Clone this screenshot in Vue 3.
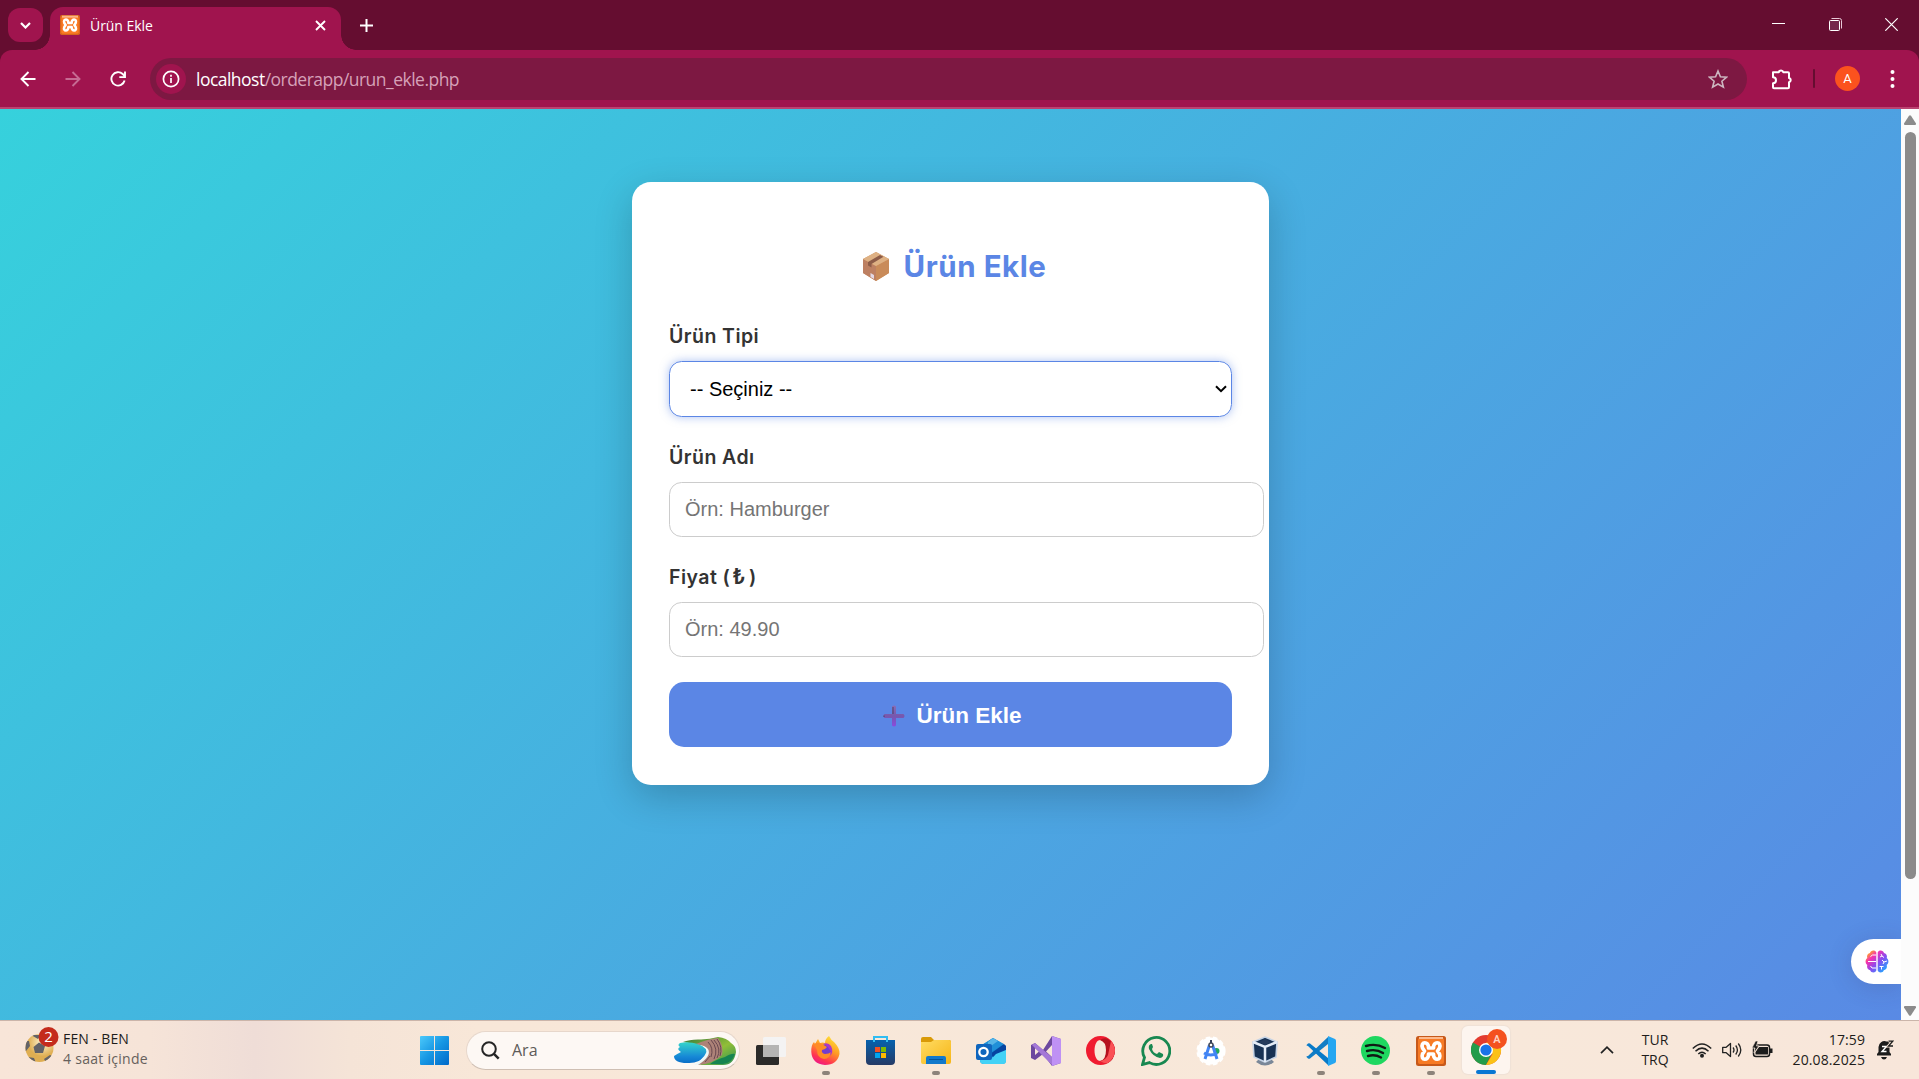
<script setup>
import { ref } from 'vue'

const productType = ref('')
const name = ref('')
const price = ref('')
</script>

<template>
  <div class="screen">
    <header class="tabstrip">
      <button class="tab-search">
        <svg width="11" height="7" viewBox="0 0 11 7"><path d="M1 1l4.500 4.500L10 1" fill="none" stroke="#fff" stroke-width="2.200" /></svg>
      </button>
      <div class="tab">
        <svg class="favicon" width="20" height="20" viewBox="0 0 30 30">
          <rect width="30" height="30" rx="2.500" fill="#d7651b" /><rect x="2" y="2" width="26" height="26" rx="2" fill="#fb7a24" />
          <rect x="3" y="1" width="24" height="3" fill="#fbb486" />
          <path d="M12.500 12C13 5 4 5 6.500 12L8.500 15L6.500 18C4 25 13 25 12.500 18H17.500C17 25 26 25 23.500 18L21.500 15L23.500 12C26 5 17 5 17.500 12Z" fill="none" stroke="#fff" stroke-width="3.800" stroke-linejoin="round" />
        </svg>
        <span class="tab-title">Ürün Ekle</span>
        <svg class="tab-close" width="11" height="11" viewBox="0 0 11 11"><path d="M1 1l9 9M10 1l-9 9" stroke="#fff" stroke-width="1.900" /></svg>
      </div>
      <svg class="new-tab" width="13" height="13" viewBox="0 0 13 13"><path d="M6.500 0v13M0 6.500h13" stroke="#fff" stroke-width="2" /></svg>
      <div class="window-controls">
        <svg width="13" height="13" viewBox="0 0 13 13"><path d="M0 5.500h13" stroke="#fff" /></svg>
        <svg width="13" height="13" viewBox="0 0 13 13"><path d="M2.500 .5h8q2 0 2 2v8" fill="none" stroke="#e8c9d7" /><rect x=".5" y="2.500" width="10" height="10" rx="1" fill="#74264a" stroke="#fff" /></svg>
        <svg width="13" height="13" viewBox="0 0 13 13"><path d="M.3 .3l12.400 12.400M12.700 .3L.3 12.700" stroke="#fff" stroke-width="1.200" /></svg>
      </div>
    </header>

    <nav class="toolbar">
      <div class="nav-icons">
        <svg width="16" height="16" viewBox="0 0 16 16"><path d="M15.500 8H1.800M8.500 1L1.500 8l7 7" fill="none" stroke="#fff" stroke-width="1.900" /></svg>
        <svg width="16" height="16" viewBox="0 0 16 16"><path d="M.5 8h13.700M7.500 1l7 7l-7 7" fill="none" stroke="#c66b93" stroke-width="1.900" /></svg>
        <svg width="16" height="16" viewBox="0 0 16 16"><path d="M14.600 9.500A6.700 6.700 0 1 1 12.700 3L15 5.400M15 .5v5.600H9.300" fill="none" stroke="#fff" stroke-width="1.900" /></svg>
      </div>
      <div class="omnibox">
        <span class="site-info">
          <svg width="18" height="18" viewBox="0 0 18 18"><circle cx="9" cy="9" r="7.600" fill="none" stroke="#fff" stroke-width="1.700" /><path d="M9 8v5M9 4.800v2" stroke="#fff" stroke-width="1.700" /></svg>
        </span>
        <span class="url"><b>localhost</b>/orderapp/urun_ekle.php</span>
        <svg class="star" width="20" height="20" viewBox="0 0 20 20"><path d="M10 2l2.400 5.700l6.200.5l-4.700 4l1.500 6L10 15l-5.400 3.200l1.500-6l-4.700-4l6.200-.5z" fill="none" stroke="#ccb7c0" stroke-width="1.600" /></svg>
      </div>
      <svg class="puzzle" width="22" height="22" viewBox="0 0 22 22"><path d="M2 4.200h5.800a2.300 2.300 0 0 1 4.500 0H17a1 1 0 0 1 1 1v4.700a2.200 2.200 0 0 1 0 4.300v5a1 1 0 0 1-1 1H3a1 1 0 0 1-1-1v-4a3 3 0 0 0 0-6z" fill="none" stroke="#fff" stroke-width="2" stroke-linejoin="round" /></svg>
      <span class="divider"></span>
      <span class="avatar">A</span>
      <svg class="dots" width="5" height="20" viewBox="0 0 5 20"><circle cx="2.500" cy="3" r="2" fill="#fff" /><circle cx="2.500" cy="10" r="2" fill="#fff" /><circle cx="2.500" cy="17" r="2" fill="#fff" /></svg>
    </nav>

    <div class="viewport">
      <main class="page">
        <form class="card" @submit.prevent>
          <h2>
            <svg width="28" height="31" viewBox="0 0 28 31">
              <path d="M1 8L14 1l13 7v14L14 30L1 22z" fill="#cf9566" />
              <path d="M1 8l13 7v15L1 22z" fill="#bd8062" /><path d="M14 15l13-7v14l-13 8z" fill="#c98b59" />
              <path d="M1 8L14 1l13 7l-13 7z" fill="#deb184" /><path d="M6 11L18 4l3.500 1.800L9.500 13v3.500L6 14.500z" fill="#8d5c48" /><path d="M8.500 22l3.500 2v4l-3.500-2z" fill="#e3d9e5" />
            </svg>
            <span>Ürün Ekle</span>
          </h2>
          <label>Ürün Tipi</label>
          <div class="select" tabindex="0">
            <span>{{ productType || '-- Seçiniz --' }}</span>
            <svg width="12" height="8" viewBox="0 0 12 8"><path d="M1 1.200l5 5l5-5" fill="none" stroke="#000" stroke-width="2" /></svg>
          </div>
          <label>Ürün Adı</label>
          <input v-model="name" type="text" placeholder="Örn: Hamburger">
          <label>Fiyat (<span class="lira">₺</span>)</label>
          <input v-model="price" type="text" placeholder="Örn: 49.90">
          <button class="submit">
            <svg width="22" height="22" viewBox="0 0 22 22">
              <defs><linearGradient id="plus" x2="0" y2="1"><stop stop-color="#8a6cb6" /><stop offset=".5" stop-color="#7658ad" /><stop offset="1" stop-color="#8a4bdf" /></linearGradient></defs>
              <path d="M9 1.500q2-2 4 0V9h7.500q2 2 0 4H13v7.500q-2 2-4 0V13H1.500q-2-2 0-4H9z" fill="url(#plus)" /><path d="M1 10.500v1.500M10 2v7" stroke="#4c4269" />
            </svg>
            <span>Ürün Ekle</span>
          </button>
        </form>
        <div class="assistant">
          <svg width="24" height="23" viewBox="0 0 24 23">
            <defs><linearGradient id="brain" x2="1" y2="1"><stop offset=".1" stop-color="#ffab20" /><stop offset=".3" stop-color="#f52fb0" /><stop offset=".55" stop-color="#8a4bf0" /><stop offset=".9" stop-color="#1fa8ff" /></linearGradient></defs>
            <path d="M11.300 2.500C10-.5 5.500.3 5 3C2.500 3.500 1.500 6 2.300 8C0 9.500 0 13.500 2.300 15C1.500 18 3 20 5.200 20.200C6 23 10.300 23.300 11.300 20.500zM12.700 2.500C14-.5 18.500.3 19 3C21.500 3.500 22.500 6 21.700 8C24 9.500 24 13.500 21.700 15C22.500 18 21 20 18.800 20.200C18 23 13.700 23.300 12.700 20.500z" fill="url(#brain)" />
            <path d="M11 5H7.500L5.500 6.500M11 11.500H3M11 18H7l-1.500-2M15 7l2-1l2 1.500M17 6l-1-2M17 10l2 2l3-1M19 12l-1 2M14.500 16.500h4M16.500 16.500v3" fill="none" stroke="#fff" stroke-width="1" />
          </svg>
        </div>
      </main>
      <aside class="scrollbar">
        <svg width="12" height="10" viewBox="0 0 12 10"><path d="M5 .8q1-1.200 2 0l5 7.700q.2 1.500-1 1.500H1q-1.200 0-1-1.500z" fill="#8b8b8b" /></svg>
        <span class="thumb"></span>
        <svg class="down" width="12" height="10" viewBox="0 0 12 10"><path d="M5 9.200q1 1.200 2 0l5-7.700Q12.200 0 11 0H1Q-.2 0 0 1.500z" fill="#8b8b8b" /></svg>
      </aside>
    </div>

    <footer class="taskbar">
      <div class="widget">
        <svg width="34" height="36" viewBox="0 0 34 36">
          <defs><radialGradient id="ball" cx=".6" cy=".3"><stop stop-color="#fff7d6" /><stop offset="1" stop-color="#dfae52" /></radialGradient><clipPath id="ballclip"><circle cx="14.500" cy="21" r="14" /></clipPath></defs>
          <circle cx="14.500" cy="21" r="14" fill="url(#ball)" />
          <path clip-path="url(#ballclip)" d="M8.500 20l5.500-4.500l6 3.500l-2 7h-8zM0 14l4 0l1 5l-4 5H0zM3 30l6 1l2 5H3zM19 32l6-4l4 2l-7 7zM6 8h10l-3 4z" fill="#626267" />
          <circle cx="23.500" cy="10" r="10" fill="#c42b1c" /><text x="23.500" y="15.300" text-anchor="middle" fill="#fff" font-family="Open Sans, sans-serif" font-size="15">2</text>
        </svg>
        <div class="widget-text"><span>FEN - BEN</span><small>4 saat içinde</small></div>
      </div>

      <div class="apps">
        <div class="app">
          <svg width="29" height="29" viewBox="0 0 29 29"><defs><linearGradient id="win" x2="1" y2="1"><stop stop-color="#4cc9fb" /><stop offset=".5" stop-color="#1696e3" /><stop offset="1" stop-color="#0069c9" /></linearGradient></defs><path d="M1 0h13v14H0V1q0-1 1-1M15 0h13q1 0 1 1v13H15zM0 15h14v14H1q-1 0-1-1zM15 15h14v13q0 1-1 1H15z" fill="url(#win)" /></svg>
        </div>
        <div class="search">
          <svg width="19" height="19" viewBox="0 0 19 19"><circle cx="8" cy="8" r="6.800" fill="none" stroke="#252525" stroke-width="2" /><path d="M12.700 12.700l5 5" stroke="#252525" stroke-width="2.500" /></svg>
          <span>Ara</span>
          <svg class="cove" width="62" height="29" viewBox="0 0 62 29">
            <defs><linearGradient id="sea" x2="0" y2="1"><stop stop-color="#35d5cb" /><stop offset=".7" stop-color="#1687d6" /><stop offset="1" stop-color="#0a6fc7" /></linearGradient><linearGradient id="land" x2="1" y2="1"><stop stop-color="#36793b" /><stop offset=".55" stop-color="#91be38" /><stop offset="1" stop-color="#2b9155" /></linearGradient></defs>
            <path d="M9 5Q16 2 27 2.500Q36 2 44 0Q53 1 57 6Q62 9 62 15Q60 28 49 28H23Q42 20 33 9z" fill="url(#land)" />
            <path d="M6 6Q14 4 24 7Q35 11 32 18Q25 27 13 26Q0 26 0 19Q3 17 7 15Q2 12 6 10Q3 8 6 6" fill="url(#sea)" /><path d="M33 10q1 9-13 18h6q12-7 12-14z" fill="#edf7f8" />
            <path d="M22 7Q34 2 44 1Q50 9 48 18Q39 27 24 28Q38 19 34 12Q31 8 22 7" fill="#ad8278" /><path d="M34 5q6 6 3 15M37 3q8 9 3 19M40 3q8 9 3 18M43 2q6 8 3 17M31 25l5-6" fill="none" stroke="#68484f" /><path d="M51 20q7-4 10-3q-3 9-12 10l-13 0q5-4 15-7" fill="#168451" />
          </svg>
        </div>
        <div class="app">
          <svg width="30" height="28" viewBox="0 0 30 28"><rect y="8" width="23" height="20" rx="1.500" fill="#2b2a29" /><rect x="7" width="23" height="20" rx="1.500" fill="#f4f3f3" /><path d="M7 8h16v12H7z" fill="#b5b4b3" /></svg>
        </div>
        <div class="app running">
          <svg width="29" height="29" viewBox="0 0 29 29"><defs><linearGradient id="fox" x1=".8" x2=".3" y2="1"><stop stop-color="#ffe83a" /><stop offset=".45" stop-color="#ff9a24" /><stop offset=".8" stop-color="#ff3551" /><stop offset="1" stop-color="#ed168b" /></linearGradient></defs><path d="M18 0q2 4 5 6q6 6 5.500 12Q26 29 14 29Q1 28 .3 16Q0 9 3 6l1 2l3-5l2 4q3-1 5 0q0-4 4-7" fill="url(#fox)" /><circle cx="14" cy="15" r="6.500" fill="#743ccd" /><path d="M3 8q5-2 8 0l5 3q-2 3-5 3q-1 3 3 4q4 0 6-2q-1 7-7 7Q6 22 6 14z" fill="#ff8b26" /><path d="M12 8q5-2 8 2q3 6-1 10q2-5-1-7q-1-3-6-5" fill="#ac37c8" /></svg>
        </div>
        <div class="app">
          <svg width="29" height="29" viewBox="0 0 29 29"><defs><linearGradient id="store" x2="0" y2="1"><stop stop-color="#0661ad" /><stop offset="1" stop-color="#263b66" /></linearGradient></defs><path d="M0 4h29v21q0 4-4 4H4q-4 0-4-4z" fill="url(#store)" /><path d="M8 6V1h13v5" fill="none" stroke="#31bdf2" stroke-width="2" /><path d="M9 11h5v5H9z" fill="#f25022" /><path d="M15 11h5v5h-5z" fill="#7fba00" /><path d="M9 17h5v5H9z" fill="#00a4ef" /><path d="M15 17h5v5h-5z" fill="#ffb900" /></svg>
        </div>
        <div class="app running">
          <svg width="30" height="27" viewBox="0 0 30 27"><defs><linearGradient id="folder" x2="1" y2="1"><stop stop-color="#ffdc63" /><stop offset="1" stop-color="#f6b516" /></linearGradient></defs><path d="M0 2q0-2 2-2h8l3 3h15q2 0 2 2v8H0z" fill="#d99a08" /><path d="M0 5h10l3-2h15q2 0 2 2v20q0 2-2 2H2q-2 0-2-2z" fill="url(#folder)" /><path d="M5 27v-6q0-2 2-2h16q2 0 2 2v6z" fill="#1279cb" /><path d="M8 22.500h14" stroke="#06559a" /></svg>
        </div>
        <div class="app">
          <svg width="30" height="26" viewBox="0 0 30 26"><path d="M4 8L17 0l13 8v14q0 4-4 4H8q-4 0-4-4z" fill="#178bd1" /><path d="M5 8L17 0l11 6l-14 9z" fill="#1f8fd8" /><path d="M12 4l5-4l5 3l-10 7z" fill="#55b4e7" /><path d="M14 16L28 6l2 2v4l-12 8z" fill="#0645a1" /><path d="M4 22q12 0 16-6l10-4v11q0 3-3 3H8q-4 0-4-4" fill="#43d2f6" /><rect y="6" width="16" height="16" rx="2" fill="#0f65bd" /><circle cx="7.500" cy="14" r="4.200" fill="none" stroke="#fff" stroke-width="2.300" /></svg>
        </div>
        <div class="app">
          <svg width="30" height="30" viewBox="0 0 30 30"><path d="M0 9l4-2l8 7l9-14l9 3v24l-9 3L12 18l-8 6l-4-2zM4 12v7l4-3.500zM21 9l-6 6.500l6 5.500z" fill="#6d489f" fill-rule="evenodd" /><path d="M4 7l18 15v8L1 9z" fill="#a478d7" /><path d="M21 0l9 3v24l-9 3z" fill="#bf91f4" /></svg>
        </div>
        <div class="app">
          <svg width="29" height="29" viewBox="0 0 29 29"><path d="M14.500 0a14.500 14.500 0 1 0 0 29a14.500 14.500 0 1 0 0-29M14.500 4c4 0 6 5 6 10.500s-2 10.500-6 10.500s-6-5-6-10.500s2-10.500 6-10.500" fill="#f01b30" fill-rule="evenodd" /><path d="M14 4Q18 1 22 3Q29 8 29 15Q28 24 22 27Q18 28 14 25q6-1 6-11q0-8-6-10" fill="#b5121f" /><path d="M25 5q4 5 4 10q-1 8-7 12q-4 1-8-2q6-1 8-6z" fill="#fa5055" /></svg>
        </div>
        <div class="app">
          <svg width="30" height="30" viewBox="0 0 30 30"><path d="M1.500 28.500l2-7A13.500 13.500 0 1 1 8.500 26.600z" fill="none" stroke="#188851" stroke-width="2.800" /><path d="M10 8q-3 1-2 5q4 8 11 9q4-1 3-4l-4-2l-2 2q-4-1-5-5l1-2l-1-3z" fill="#188851" /></svg>
        </div>
        <div class="app">
          <svg width="30" height="30" viewBox="0 0 30 30"><circle cx="15" cy="15" r="13.600" fill="#fff" /><circle cx="15" cy="15" r="13.600" fill="none" stroke="#fff" stroke-width="2" stroke-dasharray="4.500 2.800" /><circle cx="20.500" cy="15" r="3" fill="#24a85d" /><path d="M13.500 9L9 23M16.500 9L21 23M8 17q7 4 13 0" fill="none" stroke="#4285f4" stroke-width="3" /><circle cx="15" cy="9" r="2" fill="#fff" stroke="#454c5b" stroke-width="1.500" /><path d="M15 4v3" stroke="#37415b" stroke-width="2" /></svg>
        </div>
        <div class="app virtual">
          <svg width="26" height="30" viewBox="0 0 26 30"><path d="M6 24h14l2 2q-9 7-18 0z" fill="#7a8798" /><path d="M1 6L13 1l12 5l-1 15l-11 5l-11-5z" fill="#183254" stroke="#c5d3e5" stroke-width="1.600" /><path d="M1 6l12 5l12-5M13 11v15" fill="none" stroke="#e3ebf6" stroke-width="2.500" /><path d="M7 6l6-3l6 3l-6 3z" fill="#253a5b" /></svg>
        </div>
        <div class="app running">
          <svg width="30" height="30" viewBox="0 0 30 30"><path d="M2 20L22 1v7L4 22.500q-1 .5-2 0L.5 21q-.5-1 1.500-1" fill="#127dc5" /><path d="M2 10l20 19v-7L4 7.500q-1-.5-2 0L.5 9q-.5.500 1.500 1" fill="#087ac8" /><path d="M22 0l7 3q1 .5 1 2v20q0 1.500-1 2l-7 3z" fill="#25a6f1" /></svg>
        </div>
        <div class="app running">
          <svg width="29" height="29" viewBox="0 0 29 29"><circle cx="14.500" cy="14.500" r="14.500" fill="#1fd760" /><path d="M5 10q10-3 19 2M6 15q9-2.500 16 2M7 20q7-2 13 1.500" fill="none" stroke="#101a14" stroke-width="2.400" stroke-linecap="round" /></svg>
        </div>
        <div class="app running">
          <svg width="30" height="30" viewBox="0 0 30 30"><rect width="30" height="30" rx="2.500" fill="#c7591a" /><rect x="2" y="2" width="26" height="26" rx="2" fill="#f77b25" /><path d="M3 2h24" stroke="#fcb98d" stroke-width="2" /><path d="M12.500 12C13 5 4 5 6.500 12L8.500 15L6.500 18C4 25 13 25 12.500 18H17.500C17 25 26 25 23.500 18L21.500 15L23.500 12C26 5 17 5 17.500 12Z" fill="none" stroke="#fff" stroke-width="3.700" stroke-linejoin="round" /></svg>
        </div>
        <div class="app active">
          <svg width="36" height="36" viewBox="0 0 36 36"><g transform="translate(0 6)"><circle cx="15" cy="15" r="15" fill="#e33b2f" /><path d="M15 15L2 7.500A15 15 0 0 0 15 30l6-12z" fill="#239c4b" /><path d="M15 30A15 15 0 0 0 28 7.500H15L21.500 19z" fill="#fbc116" /><circle cx="15" cy="15" r="7" fill="#fff" /><circle cx="15" cy="15" r="5.600" fill="#1a73e8" /></g><circle cx="26" cy="10" r="10" fill="#f4511e" /><text x="26" y="14" text-anchor="middle" fill="#ffd3c3" font-size="11" font-weight="600" font-family="Roboto, sans-serif">A</text></svg>
        </div>
      </div>

      <div class="tray">
        <svg class="chevron" width="14" height="8" viewBox="0 0 14 8"><path d="M1 7.200l6-6l6 6" fill="none" stroke="#222" stroke-width="1.700" /></svg>
        <div class="lang"><span>TUR</span><span>TRQ</span></div>
        <svg class="wifi" width="20" height="15" viewBox="0 0 20 15"><path d="M.8 5.500Q10-3.500 19.200 5.500M3.500 8.300Q10 2 16.500 8.300M6.300 11Q10 7.500 13.700 11" fill="none" stroke="#222" stroke-width="1.500" /><circle cx="10" cy="12.800" r="2" fill="#222" /></svg>
        <svg class="volume" width="20" height="16" viewBox="0 0 20 16"><path d="M.7 5.300h3.500L8.500 1.500v13l-4.300-3.800H.7z" fill="none" stroke="#222" stroke-width="1.300" stroke-linejoin="round" /><path d="M11 5.500q2 2.500 0 5M13.700 3.500q3.500 4.500 0 9M16.300 1.500q5 6.500 0 13" fill="none" stroke="#222" stroke-width="1.300" /></svg>
        <svg class="battery" width="21" height="17" viewBox="0 0 21 17"><rect x="1.500" y="4" width="16" height="11.500" rx="2.500" fill="none" stroke="#1c1c1c" stroke-width="1.500" /><path d="M7 6h9v7.500H3.500V11zM18 7.500h2.500v4.500H18z" fill="#1c1c1c" /><path d="M3.500 0L0 7h3l-1 5l5-7H4.500L6 0z" fill="#1c1c1c" stroke="#f7e6d8" stroke-width=".7" /></svg>
        <div class="clock"><span>17:59</span><span>20.08.2025</span></div>
        <svg class="bell" width="18" height="20" viewBox="0 0 18 20"><path d="M1 15.500V14l1.500-2V7a6 6 0 0 1 8-5.500h3V12l1.500 2v1.500zM5 17h6q-1 2.500-3 2.500T5 17" fill="#1c1c1c" /><path d="M6 6.500h4.500L6 11.500h4.500" fill="none" stroke="#fff" stroke-width="1.400" /><path d="M12 .8h5L12.500 6H17" fill="none" stroke="#f7e6d8" stroke-width="3" /><path d="M12.500 1.200h4.300L12.500 6h4.500" fill="none" stroke="#1c1c1c" stroke-width="1.300" /></svg>
      </div>
    </footer>
  </div>
</template>

<style>
html, body { overflow: hidden; }
</style>

<style scoped>
* { box-sizing: border-box; }
svg { display: block; flex: none; }
.screen { display: flex; flex-direction: column; width: 1919px; height: 1079px; font-family: "Open Sans", "Noto Sans", sans-serif; background: #650d30; }

.tabstrip { display: flex; align-items: flex-start; height: 50px; background: #650d30; }
.tab-search { position: relative; z-index: 1; display: flex; align-items: center; justify-content: center; width: 35px; height: 34px; margin: 8px 7px 0 8px; padding: 0; border: 0; border-radius: 12px; background: #a0144e; }
.tab { position: relative; display: flex; align-items: center; width: 291px; height: 43px; margin-top: 7px; padding: 0 15px 7px 10px; border-radius: 13px 13px 0 0; background: #a0144e; color: #fff; }
.tab::before, .tab::after { content: ""; position: absolute; bottom: 0; width: 15px; height: 15px; }
.tab::before { left: -15px; background: radial-gradient(circle at 0 0, #650d30 14.5px, #a0144e 15px); }
.tab::after { right: -15px; background: radial-gradient(circle at 100% 0, #650d30 14.5px, #a0144e 15px); }
.tab-title { margin-left: 10px; font-size: 14px; letter-spacing: -.05px; }
.tab-close { margin-left: auto; }
.new-tab { margin: 19px 0 0 19px; }
.window-controls { display: flex; gap: 43.500px; margin: 18px 21px 0 auto; }

.toolbar { display: flex; align-items: center; height: 59px; border-bottom: 2px solid #bb4371; border-radius: 12px 12px 0 0; background: #a0144e; }
.nav-icons { display: flex; gap: 29px; width: 150px; padding-left: 19.500px; }
.omnibox { display: flex; align-items: center; width: 1597px; height: 42px; padding: 0 19px 0 6px; border-radius: 21px; background: #7d1842; }
.site-info { display: flex; align-items: center; justify-content: center; width: 30px; height: 30px; border-radius: 50%; background: #a0144e; }
.url { margin: 1px 0 0 10px; font-size: 17.500px; letter-spacing: -.52px; color: #d6a1b8; }
.url b { font-weight: 400; color: #fff; }
.star { margin-left: auto; }
.puzzle { margin-left: 24px; }
.divider { width: 2px; height: 19px; margin-left: 20px; border-radius: 1px; background: #650d30; }
.avatar { width: 25px; height: 25px; margin-left: 20px; border-radius: 50%; background: #fb521e; color: #fff; font: 13px/26px Roboto, sans-serif; text-align: center; }
.dots { margin-left: 30px; }

.viewport { display: flex; height: 911px; }
.page { position: relative; width: 1901px; padding-top: 73px; background: linear-gradient(135deg, #36d1dc, #5b86e5) 0 0 / 100% 1057px; overflow: hidden; }
.card { width: 637px; height: 603px; margin-left: 632px; padding: 37px; border-radius: 19px; background: #fff; box-shadow: 0 12px 38px rgba(0, 0, 0, .2); }
h2 { display: flex; align-items: center; justify-content: center; gap: 14px; height: 45px; margin: 25px 0 32px; padding-left: 7px; color: #5b86e5; font: 700 29.500px/45px Inter, sans-serif; letter-spacing: .55px; white-space: nowrap; }
label { display: block; height: 30px; margin-bottom: 10px; color: #333; font: 600 19.500px/30px Inter, sans-serif; letter-spacing: .45px; }
.lira { padding: 0 3px 0 2px; font-size: 21px; }
.select { display: flex; align-items: center; justify-content: space-between; width: 563px; height: 56px; margin-bottom: 25px; padding: 0 4px 0 20px; border: 1px solid #5b86e5; border-radius: 12.500px; box-shadow: 0 0 10px rgba(91, 134, 229, .5); font: 20px "Liberation Sans", Arial, sans-serif; }
input { display: block; width: 595px; height: 55px; margin: 0 0 25px; padding: 0 15px; border: 1px solid #ccc; border-radius: 12.500px; outline: 0; background: #fff; font: 20px "Liberation Sans", Arial, sans-serif; }
input::placeholder { color: #757575; }
.submit { display: flex; align-items: center; justify-content: center; gap: 11px; width: 563px; height: 65px; padding: 3px 6px 0 10px; border: 0; border-radius: 15px; background: #5b86e5; color: #fff; font: 700 22.500px "Liberation Sans", Arial, sans-serif; }
.assistant { position: absolute; right: 0; bottom: 36px; display: flex; align-items: center; width: 50px; height: 45px; padding-left: 14px; border-radius: 23px 0 0 23px; background: #fff; box-shadow: 0 3px 24px rgba(60, 50, 100, .2); }
.scrollbar { display: flex; flex-direction: column; align-items: center; width: 18px; padding: 6px 0 4px; background: #fcfcfc; }
.thumb { width: 11px; height: 747px; margin-top: 7px; border-radius: 6px; background: #8b8b8b; }
.down { margin-top: auto; }

.taskbar { display: flex; height: 59px; border-top: 1px solid #cbb5aa; background: linear-gradient(90deg, #f8e5d8 0, #f6e4d8 150px, #efddd7 255px, #f5e4d7 350px, #f8e7d8 480px, #f8e8da 1500px, #f8e6da 1919px); color: #1e1c1b; font-size: 14px; }
.widget { display: flex; width: 407px; padding: 6px 0 0 25px; }
.widget-text, .lang, .clock { display: flex; flex-direction: column; line-height: 20px; white-space: nowrap; }
.widget-text { margin: 2px 0 0 4px; letter-spacing: .15px; }
.widget-text small { font-size: 14px; letter-spacing: .28px; color: #66605c; }
.apps { display: flex; align-items: center; height: 58px; }
.app { position: relative; display: flex; align-items: center; justify-content: center; width: 55px; height: 58px; padding: 1px 1px 0 0; }
.running::after, .active::after { content: ""; position: absolute; bottom: 4px; left: 23px; width: 8px; height: 4px; border-radius: 2px; background: #8d837a; }
.virtual { padding-right: 2px; }
.active { width: 48px; height: 48px; margin: 0 3.500px; padding: 0 0 6px 6px; border-radius: 6px; background: #fdf5ef; box-shadow: 0 0 1px 1px #efe1d6; }
.active::after { bottom: 0; left: 14px; width: 20px; background: #0877d3; }
.search { display: flex; align-items: center; width: 274px; height: 39px; margin: 0 3.500px 0 4px; padding: 0 3px 0 14px; border: 1px solid #e7d7cb; border-bottom-color: #cfbfb3; border-radius: 20px; background: #fdf8f4; }
.search span { margin-left: 12px; color: #5e5b59; font-size: 16px; }
.cove { margin: 3px 0 0 auto; }
.tray { display: flex; align-items: center; height: 58px; margin-left: auto; padding-right: 25px; }
.lang { align-items: center; width: 30px; margin: 0 22px 0 26px; }
.volume { margin-left: 10px; }
.battery { margin: 0 0 2px 10px; }
.clock { align-items: flex-end; width: 92px; margin-right: 11px; letter-spacing: .1px; }
</style>
